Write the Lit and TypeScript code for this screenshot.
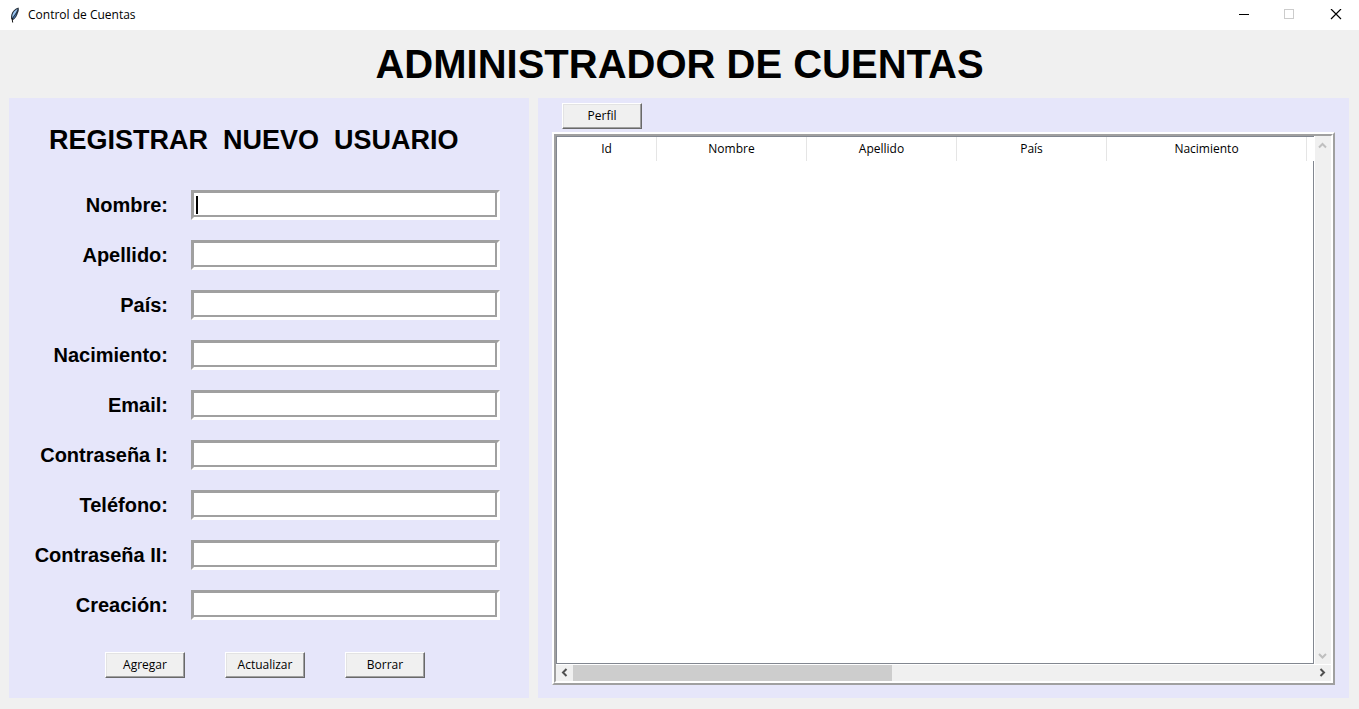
import { LitElement, html, css } from "lit";
import { customElement } from "lit/decorators.js";
import { classMap } from "lit/directives/class-map.js";

const FIELDS = [
  { id: "nombre", label: "Nombre:" },
  { id: "apellido", label: "Apellido:" },
  { id: "pais", label: "País:" },
  { id: "nacimiento", label: "Nacimiento:" },
  { id: "email", label: "Email:" },
  { id: "contrasena1", label: "Contraseña I:" },
  { id: "telefono", label: "Teléfono:" },
  { id: "contrasena2", label: "Contraseña II:" },
  { id: "creacion", label: "Creación:" },
];

const COLUMNS = [
  { title: "Id", size: "narrow" },
  { title: "Nombre", size: "medium" },
  { title: "Apellido", size: "medium" },
  { title: "País", size: "medium" },
  { title: "Nacimiento", size: "wide" },
];

const buttonStyles = css`
  .button {
    box-sizing: border-box;
    width: 80px;
    height: 26px;
    padding: 0;
    border: 1px solid;
    border-color: #ffffff #696969 #696969 #ffffff;
    box-shadow: inset -1px -1px 0 #a0a0a0, inset 1px 1px 0 #e3e3e3;
    border-radius: 0;
    background: #f0f0f0;
    color: #000000;
    font: 12px/16px "Open Sans", "Noto Sans", sans-serif;
  }
`;

@customElement("title-bar")
class TitleBar extends LitElement {
  static styles = css`
    :host {
      display: flex;
      align-items: center;
      height: 30px;
      background: #ffffff;
      font: 12px/16px "Open Sans", "Noto Sans", sans-serif;
    }
    .icon {
      width: 16px;
      height: 16px;
      margin: 0 5px 0 7px;
    }
    .title {
      flex: 1;
    }
    .control {
      display: grid;
      place-items: center;
      width: 46px;
      height: 30px;
      padding: 0;
      border: 0;
      background: none;
    }
    .glyph {
      display: block;
      width: 12px;
      height: 12px;
    }
  `;

  render() {
    return html`
      <svg class="icon" viewBox="0 0 16 16" aria-hidden="true">
        <path d="M11.5 .5C8 1.500 5.200 4.500 4.300 7.700c-.4 1.500-.4 3 0 4.300l1.400 1.200c2-1 3.500-2.800 4.300-4.900.2-.7.600-1.300.7-1.900C11.700 4.500 12.300 2.500 11.500.5z" fill="#26303c" />
        <path d="M10.700 1.700C8 3 6.200 5.300 5.400 7.900l-.3 3C7 8.500 9.200 5.500 10.700 1.700z" fill="#9cc8f5" />
        <path d="M11 2.500C10.300 6 7.700 9 5.700 12c1.700-.9 2.800-2.500 3.400-4.300l.5-2C10.500 4.600 11 3.600 11 2.500z" fill="#4b8ee0" />
        <path d="M5 11 5.700 15.500" fill="none" stroke="#111111" />
      </svg>
      <span class="title">Control de Cuentas</span>
      <button class="control" aria-label="Minimizar">
        <svg class="glyph" viewBox="0 0 12 12"><path d="M1 5.500h10" stroke="#000000" /></svg>
      </button>
      <button class="control" aria-label="Maximizar" disabled>
        <svg class="glyph" viewBox="0 0 12 12"><rect x=".5" y=".5" width="9" height="9" fill="none" stroke="#cccccc" /></svg>
      </button>
      <button class="control" aria-label="Cerrar">
        <svg class="glyph" viewBox="0 0 12 12"><path d="M1 0l10 10M11 0L1 10" stroke="#000000" stroke-width="1.200" /></svg>
      </button>
    `;
  }
}

@customElement("user-form")
class UserForm extends LitElement {
  static styles = [
    buttonStyles,
    css`
      :host {
        display: block;
        box-sizing: border-box;
        padding: 24px 29px 20px 0;
        background: #e6e6fa;
        font-family: "Liberation Sans", Arial, sans-serif;
      }
      .heading {
        margin: 0 0 32px 40px;
        font-size: 27px;
        line-height: 36px;
        font-weight: bold;
        white-space: pre;
      }
      .fields {
        display: grid;
        gap: 20px;
      }
      .field {
        display: grid;
        grid-template-columns: 159px 1fr;
        column-gap: 23px;
        align-items: center;
      }
      .label {
        text-align: right;
        font-size: 20px;
        line-height: 30px;
        font-weight: bold;
      }
      .input {
        box-sizing: border-box;
        width: 100%;
        height: 30px;
        margin: 0;
        padding: 0 4px;
        border: 3px solid;
        border-color: #a0a0a0 #ffffff #ffffff #a0a0a0;
        box-shadow: inset -2px -2px 0 #a0a0a0;
        border-radius: 0;
        outline: 0;
        background: #ffffff;
        font: 16px/20px "Liberation Sans", Arial, sans-serif;
      }
      .active {
        background: linear-gradient(#000000, #000000) 2px 3px / 2px 18px no-repeat #ffffff;
      }
      .actions {
        display: flex;
        gap: 40px;
        margin: 32px 0 0 96px;
      }
    `,
  ];

  render() {
    return html`
      <h2 class="heading">REGISTRAR  NUEVO  USUARIO</h2>
      <div class="fields">
        ${FIELDS.map(
          (field, index) => html`
            <div class="field">
              <label class="label" for=${field.id}>${field.label}</label>
              <input class=${classMap({ input: true, active: index === 0 })} id=${field.id} type="text" />
            </div>
          `
        )}
      </div>
      <div class="actions">
        <button class="button">Agregar</button>
        <button class="button">Actualizar</button>
        <button class="button">Borrar</button>
      </div>
    `;
  }
}

@customElement("account-list")
class AccountList extends LitElement {
  static styles = [
    buttonStyles,
    css`
      :host {
        display: flex;
        flex-direction: column;
        box-sizing: border-box;
        padding: 5px 14px 13px;
        background: #e6e6fa;
        font: 12px/16px "Open Sans", "Noto Sans", sans-serif;
      }
      .profile {
        margin: 0 0 3px 10px;
      }
      .frame {
        flex: 1;
        display: flex;
        border: 2px solid;
        border-color: #ffffff #a0a0a0 #a0a0a0 #ffffff;
      }
      .content {
        flex: 1;
        display: grid;
        grid-template: minmax(0, 1fr) 16px / minmax(0, 1fr) 16px;
        gap: 1px;
        border: 2px solid;
        border-color: #a0a0a0 #ffffff #ffffff #a0a0a0;
        background: #ffffff;
      }
      .tree {
        box-sizing: border-box;
        border: solid #828790;
        border-width: 1px 0 1px 1px;
        overflow: hidden;
      }
      .table {
        width: 100%;
        height: 100%;
        table-layout: fixed;
        border-spacing: 0;
      }
      .head {
        box-sizing: border-box;
        height: 24px;
        padding: 0;
        font-weight: normal;
        text-align: center;
        border-right: 1px solid #e5e5e5;
      }
      .narrow {
        width: 100px;
      }
      .medium {
        width: 150px;
      }
      .wide {
        width: 200px;
      }
      .rest {
        border-right: 0;
      }
      .body {
        padding: 0;
        border-right: 1px solid #828790;
      }
      .bar {
        display: flex;
        background: #f0f0f0;
      }
      .vertical {
        flex-direction: column;
        justify-content: space-between;
      }
      .horizontal {
        grid-column: 1 / -1;
      }
      .track {
        flex: 1;
      }
      .thumb {
        width: 43%;
        height: 16px;
        background: #cdcdcd;
      }
      .arrow {
        width: 17px;
        height: 16px;
        padding: 0;
        border: 0;
        background: none;
        color: #505050;
      }
      .arrow:disabled {
        width: 16px;
        height: 17px;
        color: #bfbfbf;
      }
      .chevron {
        display: block;
        width: 16px;
        height: 16px;
        fill: none;
        stroke: currentColor;
        stroke-width: 2;
      }
    `,
  ];

  private arrow(label: string, path: string, disabled: boolean) {
    return html`
      <button class="arrow" aria-label=${label} ?disabled=${disabled}>
        <svg class="chevron" viewBox="0 0 16 16"><path d=${path} /></svg>
      </button>
    `;
  }

  render() {
    return html`
      <button class="button profile">Perfil</button>
      <div class="frame">
        <div class="content">
          <div class="tree">
            <table class="table">
              <thead>
                <tr>
                  ${COLUMNS.map(
                    (column) => html`<th class="head ${column.size}" scope="col">${column.title}</th>`
                  )}
                  <td class="head rest"></td>
                </tr>
              </thead>
              <tbody>
                <tr>
                  <td class="body" colspan="6"></td>
                </tr>
              </tbody>
            </table>
          </div>
          <div class="bar vertical">
            ${this.arrow("Subir", "M4 10.500 7.500 7 11 10.500", true)}
            ${this.arrow("Bajar", "M4 6 7.500 9.500 11 6", true)}
          </div>
          <div class="bar horizontal">
            ${this.arrow("Izquierda", "M10.500 4 7 7.500 10.500 11", false)}
            <div class="track"><div class="thumb"></div></div>
            ${this.arrow("Derecha", "M6.500 4 10 7.500 6.500 11", false)}
          </div>
        </div>
      </div>
    `;
  }
}

@customElement("app-root")
class AppRoot extends LitElement {
  static styles = css`
    :host {
      display: flex;
      flex-direction: column;
      box-sizing: border-box;
      min-height: 100vh;
      background: #f0f0f0;
      color: #000000;
    }
    .title {
      margin: 0;
      padding: 10px 0;
      text-align: center;
      font: bold 40px/48px "Liberation Sans", Arial, sans-serif;
    }
    .panels {
      flex: 1;
      display: grid;
      grid-template-columns: 520px minmax(0, 1fr);
      gap: 9px;
      padding: 0 10px 11px 9px;
    }
  `;

  render() {
    return html`
      <title-bar></title-bar>
      <h1 class="title">ADMINISTRADOR DE CUENTAS</h1>
      <main class="panels">
        <user-form></user-form>
        <account-list></account-list>
      </main>
    `;
  }
}
